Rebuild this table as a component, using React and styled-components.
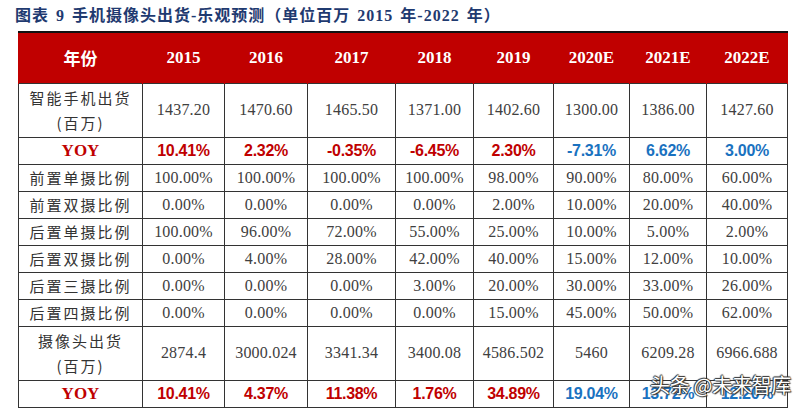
import React from "react";
import styled, { createGlobalStyle } from "styled-components";

const GlobalStyle = createGlobalStyle`
  body {
    margin: 0;
    background: #fff;
    font-family: "Liberation Serif", "Noto Sans CJK SC", serif;
  }
`;

const Page = styled.div`
  position: relative;
  width: 807px;
  height: 409px;
  padding: 7px 0 0 15px;
  box-sizing: border-box;
  overflow: hidden;
`;

const Title = styled.h1`
  margin: 0 0 6px;
  font-family: "Liberation Serif", "Noto Sans CJK SC", serif;
  font-size: 16px;
  line-height: 18px;
  font-weight: 700;
  color: #1f3a70;
  letter-spacing: 1px;
  word-spacing: 2px;
  white-space: nowrap;
`;

const Table = styled.table`
  margin-left: 3px;
  width: 769px;
  table-layout: fixed;
  border-collapse: collapse;
  border-top: 2px solid #111;
`;

const HeadRow = styled.tr`
  height: 51px;
  background: #c00000;
`;

const HeadCell = styled.th`
  padding: 0;
  color: #fff;
  font-size: 17px;
  line-height: 20px;
  font-weight: 700;
  text-align: center;
  border-left: 1px solid #c00000;
  border-right: 1px solid #c00000;
  font-family: ${({ $cjk }) =>
    $cjk ? `"Noto Sans CJK SC", sans-serif` : `"Liberation Serif", serif`};
`;

const Row = styled.tr`
  height: ${({ $tall }) => ($tall ? "54px" : "27px")};
`;

const Label = styled.td`
  padding: 0;
  border: 1px solid #333;
  text-align: center;
  font-family: "Noto Sans CJK SC", sans-serif;
  font-size: 15px;
  line-height: 25px;
  letter-spacing: 2px;
  color: #333;
`;

const YoyLabel = styled.td`
  padding: 0;
  border: 1px solid #333;
  text-align: center;
  font-family: "Liberation Serif", serif;
  font-size: 17px;
  line-height: 20px;
  font-weight: 700;
  color: #c00000;
`;

const Cell = styled.td`
  padding: 0;
  border: 1px solid #333;
  text-align: center;
  font-size: 16px;
  line-height: 20px;
  color: ${({ $tone }) =>
    $tone === "red" ? "#c00000" : $tone === "blue" ? "#1a72c0" : "#404040"};
  font-weight: ${({ $tone }) => ($tone ? 700 : 400)};
  font-family: ${({ $tone }) =>
    $tone ? `"Liberation Sans", sans-serif` : `"Liberation Serif", serif`};
  letter-spacing: ${({ $tone }) => ($tone ? "-0.3px" : "0.2px")};
`;

const Watermark = styled.div`
  position: absolute;
  left: 650px;
  top: 372px;
  font-family: "Noto Sans CJK SC", sans-serif;
  font-size: 20px;
  line-height: 26px;
  color: #fff;
  letter-spacing: -0.3px;
  text-shadow: 0 0 1px #111, 1px 1px 1px #333, -1px 0 1px #333, 0 -1px 1px #333;
  white-space: nowrap;
`;

const years = ["2015", "2016", "2017", "2018", "2019", "2020E", "2021E", "2022E"];
const widths = [124, 82, 83, 88, 78, 80, 76, 77, 81];

const rows = [
  { label: ["智能手机出货", "(百万)"], values: ["1437.20", "1470.60", "1465.50", "1371.00", "1402.60", "1300.00", "1386.00", "1427.60"] },
  { yoy: true, values: ["10.41%", "2.32%", "-0.35%", "-6.45%", "2.30%", "-7.31%", "6.62%", "3.00%"] },
  { label: ["前置单摄比例"], values: ["100.00%", "100.00%", "100.00%", "100.00%", "98.00%", "90.00%", "80.00%", "60.00%"] },
  { label: ["前置双摄比例"], values: ["0.00%", "0.00%", "0.00%", "0.00%", "2.00%", "10.00%", "20.00%", "40.00%"] },
  { label: ["后置单摄比例"], values: ["100.00%", "96.00%", "72.00%", "55.00%", "25.00%", "10.00%", "5.00%", "2.00%"] },
  { label: ["后置双摄比例"], values: ["0.00%", "4.00%", "28.00%", "42.00%", "40.00%", "15.00%", "12.00%", "10.00%"] },
  { label: ["后置三摄比例"], values: ["0.00%", "0.00%", "0.00%", "3.00%", "20.00%", "30.00%", "33.00%", "26.00%"] },
  { label: ["后置四摄比例"], values: ["0.00%", "0.00%", "0.00%", "0.00%", "15.00%", "45.00%", "50.00%", "62.00%"] },
  { label: ["摄像头出货", "(百万)"], values: ["2874.4", "3000.024", "3341.34", "3400.08", "4586.502", "5460", "6209.28", "6966.688"] },
  { yoy: true, values: ["10.41%", "4.37%", "11.38%", "1.76%", "34.89%", "19.04%", "13.72%", "12.20%"] },
];

export default function App() {
  return (
    <Page>
      <GlobalStyle />
      <Title>图表 9 手机摄像头出货-乐观预测（单位百万 2015 年-2022 年）</Title>
      <Table>
        <colgroup>
          {widths.map((w, i) => (
            <col key={i} style={{ width: w }} />
          ))}
        </colgroup>
        <thead>
          <HeadRow>
            <HeadCell $cjk>年份</HeadCell>
            {years.map((y) => (
              <HeadCell key={y}>{y}</HeadCell>
            ))}
          </HeadRow>
        </thead>
        <tbody>
          {rows.map((r, i) => (
            <Row key={i} $tall={r.label && r.label.length > 1}>
              {r.yoy ? (
                <YoyLabel>YOY</YoyLabel>
              ) : (
                <Label>
                  {r.label.map((l, j) => (
                    <div key={j}>{l}</div>
                  ))}
                </Label>
              )}
              {r.values.map((v, j) => (
                <Cell key={j} $tone={r.yoy ? (j >= 5 ? "blue" : "red") : undefined}>
                  {v}
                </Cell>
              ))}
            </Row>
          ))}
        </tbody>
      </Table>
      <Watermark>头条 @未来智库</Watermark>
    </Page>
  );
}
